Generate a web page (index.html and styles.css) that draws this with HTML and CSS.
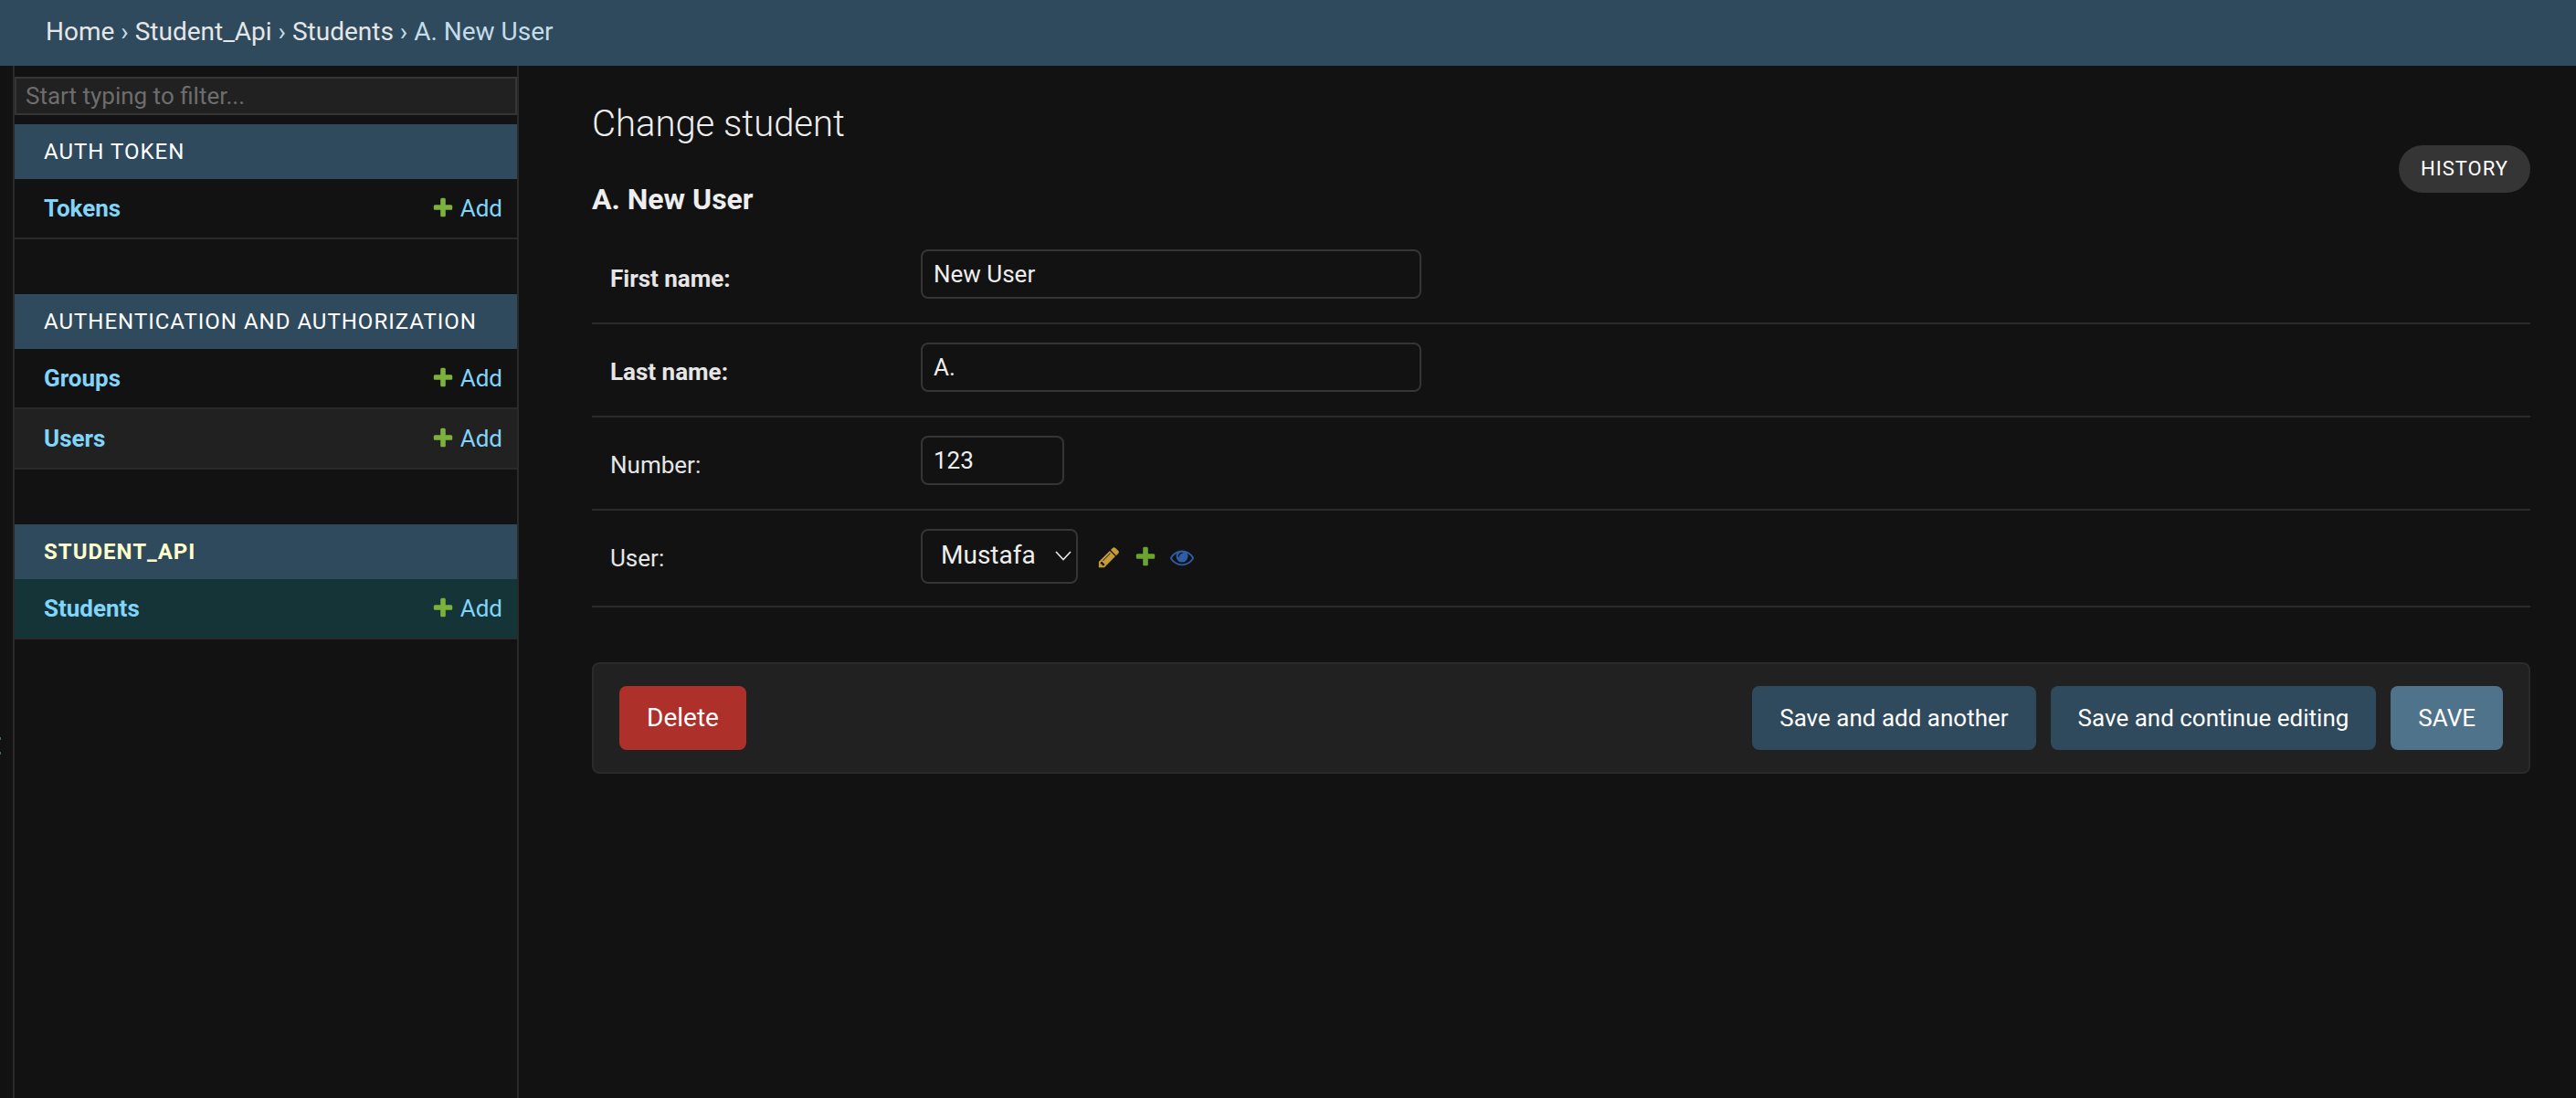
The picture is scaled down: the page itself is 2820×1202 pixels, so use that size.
FILE: index.html
```html
<!DOCTYPE html>
<html lang="en">
<head>
    <meta charset="UTF-8">
    <meta name="viewport" content="width=device-width, initial-scale=1.0">
    <title>Change student</title>
    <link rel="stylesheet" href="styles.css">
</head>
<body>
    <div class="breadcrumbs">
        <a href="#">Home</a> › <a href="#">Student_Api</a> › <a href="#">Students</a> › A. New User
    </div>

    <div class="main">
        <button class="sidebar-toggle" aria-label="Toggle navigation"><i></i><i></i></button>

        <nav class="sidebar">
            <input class="nav-filter" type="search" placeholder="Start typing to filter...">

            <div class="app">
                <div class="app-caption">Auth Token</div>
                <div class="app-row">
                    <a class="model-link" href="#">Tokens</a>
                    <a class="add-link" href="#">
                        <svg class="icon" viewBox="0 0 1792 1792"><path class="fill-plus" d="M1600 736v192q0 40-28 68t-68 28h-416v416q0 40-28 68t-68 28h-192q-40 0-68-28t-28-68v-416h-416q-40 0-68-28t-28-68v-192q0-40 28-68t68-28h416v-416q0-40 28-68t68-28h192q40 0 68 28t28 68v416h416q40 0 68 28t28 68z"/></svg>
                        Add
                    </a>
                </div>
            </div>

            <div class="app">
                <div class="app-caption">Authentication and Authorization</div>
                <div class="app-row">
                    <a class="model-link" href="#">Groups</a>
                    <a class="add-link" href="#">
                        <svg class="icon" viewBox="0 0 1792 1792"><path class="fill-plus" d="M1600 736v192q0 40-28 68t-68 28h-416v416q0 40-28 68t-68 28h-192q-40 0-68-28t-28-68v-416h-416q-40 0-68-28t-28-68v-192q0-40 28-68t68-28h416v-416q0-40 28-68t68-28h192q40 0 68 28t28 68v416h416q40 0 68 28t28 68z"/></svg>
                        Add
                    </a>
                </div>
                <div class="app-row alt">
                    <a class="model-link" href="#">Users</a>
                    <a class="add-link" href="#">
                        <svg class="icon" viewBox="0 0 1792 1792"><path class="fill-plus" d="M1600 736v192q0 40-28 68t-68 28h-416v416q0 40-28 68t-68 28h-192q-40 0-68-28t-28-68v-416h-416q-40 0-68-28t-28-68v-192q0-40 28-68t68-28h416v-416q0-40 28-68t68-28h192q40 0 68 28t28 68v416h416q40 0 68 28t28 68z"/></svg>
                        Add
                    </a>
                </div>
            </div>

            <div class="app">
                <div class="app-caption current">Student_Api</div>
                <div class="app-row selected">
                    <a class="model-link" href="#">Students</a>
                    <a class="add-link" href="#">
                        <svg class="icon" viewBox="0 0 1792 1792"><path class="fill-plus" d="M1600 736v192q0 40-28 68t-68 28h-416v416q0 40-28 68t-68 28h-192q-40 0-68-28t-28-68v-416h-416q-40 0-68-28t-28-68v-192q0-40 28-68t68-28h416v-416q0-40 28-68t68-28h192q40 0 68 28t28 68v416h416q40 0 68 28t28 68z"/></svg>
                        Add
                    </a>
                </div>
            </div>
        </nav>

        <main class="content">
            <div class="content-head">
                <div>
                    <h1>Change student</h1>
                    <h2>A. New User</h2>
                </div>
                <a class="history-btn" href="#">History</a>
            </div>

            <form>
                <div class="form-row">
                    <label class="required" for="first">First name:</label>
                    <input class="text-input" id="first" type="text" value="New User">
                </div>
                <div class="form-row">
                    <label class="required" for="last">Last name:</label>
                    <input class="text-input" id="last" type="text" value="A.">
                </div>
                <div class="form-row">
                    <label for="number">Number:</label>
                    <input class="text-input small" id="number" type="text" value="123">
                </div>
                <div class="form-row user-row">
                    <label for="user">User:</label>
                    <div class="select-wrap">
                        <select id="user"><option>Mustafa</option></select>
                        <svg class="chevron" viewBox="0 0 18 11"><path d="M1 1l8 8.500 8-8.500"/></svg>
                    </div>
                    <div class="related">
                        <svg class="icon" viewBox="0 0 1792 1792"><path class="fill-change" d="M491 1536l91-91-235-235-91 91v107h128v128h107zm523-928q0-22-22-22-10 0-17 7l-542 542q-7 7-7 17 0 22 22 22 10 0 17-7l542-542q7-7 7-17zm-54-192l416 416-832 832h-416v-416zm683 96q0 53-37 90l-166 166-416-416 166-165q36-38 90-38 53 0 91 38l235 234q37 39 37 91z"/></svg>
                        <svg class="icon" viewBox="0 0 1792 1792"><path class="fill-add" d="M1600 736v192q0 40-28 68t-68 28h-416v416q0 40-28 68t-68 28h-192q-40 0-68-28t-28-68v-416h-416q-40 0-68-28t-28-68v-192q0-40 28-68t68-28h416v-416q0-40 28-68t68-28h192q40 0 68 28t28 68v416h416q40 0 68 28t28 68z"/></svg>
                        <svg class="icon" viewBox="0 0 1792 1792"><path class="fill-view" d="M1664 960q-152-236-381-353 61 104 61 225 0 185-131.500 316.500t-316.500 131.500-316.500-131.500-131.500-316.500q0-121 61-225-229 117-381 353 133 205 333.500 326.500t434.500 121.500 434.500-121.500 333.500-326.500zm-720-384q0-20-14-34t-34-14q-125 0-214.500 89.500t-89.500 214.500q0 20 14 34t34 14 34-14 14-34q0-86 61-147t147-61q20 0 34-14t14-34zm848 384q0 34-20 69-140 230-376.500 368.500t-499.500 138.500-499.500-139-376.500-368q-20-35-20-69t20-69q140-229 376.500-368t499.500-139 499.500 139 376.500 368q20 35 20 69z"/></svg>
                    </div>
                </div>

                <div class="submit-row">
                    <a class="btn delete" href="#">Delete</a>
                    <a class="btn" href="#">Save and add another</a>
                    <a class="btn" href="#">Save and continue editing</a>
                    <a class="btn save" href="#">SAVE</a>
                </div>
            </form>
        </main>
    </div>
</body>
</html>
```

FILE: styles.css
```css
* {
    box-sizing: border-box;
    font-family: Roboto, "Liberation Sans", sans-serif;
}
html, body {
    height: 100%;
    margin: 0;
}
body {
    background: #121212;
    color: #eeeeee;
    font-size: 26px;
    display: flex;
    flex-direction: column;
}
a {
    color: inherit;
    text-decoration: none;
}

/* top bar */
.breadcrumbs {
    height: 72px;
    flex-shrink: 0;
    padding: 0 50px;
    background: #2f4a5d;
    color: #c4dce8;
    font-size: 28px;
    line-height: 70px;
}
.breadcrumbs a {
    color: #e4e6e7;
}

.main {
    flex: 1;
    display: flex;
}
.sidebar-toggle {
    width: 16px;
    padding: 735px 0 0;
    border: none;
    border-right: 2px solid #2a2a2a;
    background: #121212;
    display: flex;
    flex-direction: column;
    gap: 13px;
}
.sidebar-toggle i {
    width: 1px;
    height: 3px;
    background: #3e6a87;
}

/* sidebar */
.sidebar {
    width: 552px;
    flex-shrink: 0;
    padding-top: 12px;
    border-right: 2px solid #2a2a2a;
}
.nav-filter {
    display: block;
    width: 100%;
    height: 42px;
    margin-bottom: 10px;
    padding: 0 10px;
    border: 2px solid #353535;
    background: #212121;
    color: #eeeeee;
    font-size: 26px;
    outline: none;
}
.nav-filter::placeholder {
    color: #6d6d6d;
}
.app {
    margin-bottom: 60px;
}
.app-caption {
    height: 60px;
    padding-left: 32px;
    background: #2f4a5d;
    color: #ffffff;
    font-size: 24px;
    line-height: 60px;
    letter-spacing: 1px;
    text-transform: uppercase;
}
.app-caption.current {
    color: #ffffcc;
    font-weight: 700;
}
.app-row {
    height: 66px;
    display: flex;
    align-items: center;
    justify-content: space-between;
    padding: 0 16px 0 32px;
    border-bottom: 2px solid #2a2a2a;
    color: #81d4fa;
}
.app-row.alt {
    background: #212121;
}
.app-row.selected {
    background: #153438;
}
.model-link {
    font-weight: 700;
}
.add-link {
    display: flex;
    align-items: center;
    gap: 6px;
}
.icon {
    width: 26px;
    height: 26px;
    flex-shrink: 0;
}
.fill-plus { fill: #7cb13c; }
.fill-add { fill: #6aa32e; }
.fill-change { fill: #c69c35; }
.fill-view { fill: #2d5ea5; }

/* form */
.content {
    flex: 1;
    padding: 40px 50px 0 80px;
}
.content-head {
    display: flex;
    justify-content: space-between;
    align-items: flex-start;
}
h1 {
    margin: 0 0 38px;
    font-size: 40px;
    font-weight: 300;
    line-height: 48px;
    color: #eeeeee;
}
h2 {
    margin: 0 0 15px;
    font-size: 32px;
    font-weight: 700;
    line-height: 40px;
    color: #eeeeee;
}
.history-btn {
    margin-top: 47px;
    height: 52px;
    padding: 0 24px;
    border-radius: 26px;
    background: #353535;
    color: #ffffff;
    font-size: 22px;
    line-height: 52px;
    letter-spacing: 1px;
    text-transform: uppercase;
}
.form-row {
    display: flex;
    align-items: flex-start;
    padding: 20px 20px 26px;
    border-bottom: 2px solid #2a2a2a;
}
.form-row label {
    width: 340px;
    flex-shrink: 0;
    padding-top: 15px;
    line-height: 34px;
    color: #e6e6e6;
}
.form-row label.required {
    font-weight: 700;
}
.text-input {
    width: 548px;
    height: 54px;
    padding: 0 12px 1px;
    border: 2px solid #353535;
    border-radius: 8px;
    background: #121212;
    color: #eeeeee;
    font-size: 26px;
    outline: none;
}
.text-input.small {
    width: 157px;
}
.form-row.user-row {
    padding-bottom: 22px;
}
.select-wrap {
    position: relative;
}
.select-wrap select {
    display: block;
    appearance: none;
    width: 172px;
    height: 60px;
    padding: 0 0 3px 20px;
    border: 2px solid #353535;
    border-radius: 8px;
    background: #121212;
    color: #eeeeee;
    font-size: 28px;
}
.chevron {
    position: absolute;
    right: 7px;
    top: 24px;
    width: 18px;
    height: 11px;
    fill: none;
    stroke: #e6e6e6;
    stroke-width: 1.6;
    pointer-events: none;
}
.related {
    display: flex;
    align-items: center;
    gap: 14px;
    height: 62px;
    margin-left: 21px;
}

/* buttons */
.submit-row {
    display: flex;
    gap: 16px;
    margin-top: 60px;
    padding: 24px 28px;
    border: 2px solid #2a2a2a;
    border-radius: 8px;
    background: #212121;
}
.btn {
    height: 70px;
    padding: 0 30px;
    border-radius: 8px;
    background: #2f4a5d;
    color: #ffffff;
    font-size: 26px;
    line-height: 70px;
}
.btn.delete {
    margin-right: auto;
    background: #ae302b;
    font-size: 28px;
}
.btn.save {
    background: #50738c;
}
```
